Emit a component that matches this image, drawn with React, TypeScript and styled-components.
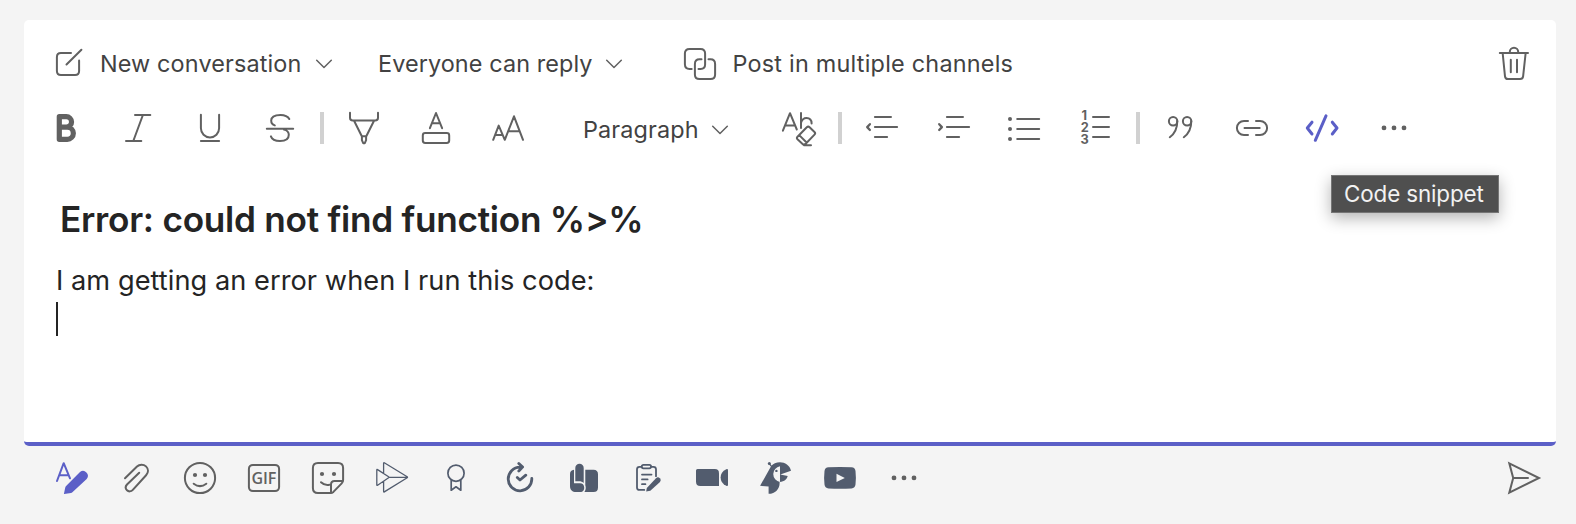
import React from "react";
import styled, { createGlobalStyle } from "styled-components";

const ink = "#616161";
const slate = "#525c6e";
const brand = "#5b5fc7";
const canvas = "#f4f4f4";

const GlobalStyle = createGlobalStyle`
  body {
    margin: 0;
    background: ${canvas};
    font-family: Inter, "Liberation Sans", sans-serif;
  }
`;

const Page = styled.main`
  box-sizing: border-box;
  width: 1576px;
  height: 524px;
  padding: 20px 20px 0 24px;
  background: ${canvas};
`;

const Composer = styled.section`
  box-sizing: border-box;
  width: 1532px;
  height: 426px;
  padding: 28px 26px 0 32px;
  background: #fff;
  border-bottom: 4px solid ${brand};
  border-radius: 5px;
`;

const OptionsRow = styled.div`
  display: flex;
  align-items: center;
  height: 32px;
`;

const Label = styled.span<{ $before: number; $width: number; $spacing: number }>`
  flex: none;
  width: ${(p) => p.$width}px;
  margin-left: ${(p) => p.$before}px;
  font-size: 23.4px;
  line-height: 32px;
  letter-spacing: ${(p) => p.$spacing}px;
  white-space: nowrap;
  color: #424242;
`;

const Spacer = styled.div<{ $width?: number }>`
  flex: ${(p) => (p.$width === undefined ? "1" : "none")};
  width: ${(p) => p.$width ?? 0}px;
`;

const FormatRow = styled.div`
  display: flex;
  align-items: center;
  height: 32px;
  margin: 32px 0 0 -6px;
`;

const ToolGroup = styled.div<{ $gap?: number }>`
  display: flex;
  flex: none;
  gap: ${(p) => p.$gap ?? 40}px;
`;

const Divider = styled.div<{ $before: number }>`
  flex: none;
  width: 4px;
  height: 32px;
  margin: 0 24px 0 ${(p) => p.$before}px;
  background: #d1d1d1;
`;

const StyleSelect = styled.div`
  display: flex;
  align-items: center;
  width: 199px;
  margin-left: 57px;
  padding-top: 4px;
`;

const Glyph = styled.svg<{ $color?: string; $weight?: number }>`
  display: block;
  flex: none;
  width: 32px;
  height: 32px;
  overflow: visible;
  fill: none;
  color: ${(p) => p.$color ?? ink};
  stroke: currentColor;
  stroke-width: ${(p) => p.$weight ?? 2};
  stroke-linecap: round;
  stroke-linejoin: round;

  .solid {
    fill: currentColor;
    stroke: none;
  }
  .cut {
    fill: ${canvas};
    stroke: none;
  }
  text {
    fill: currentColor;
    stroke: none;
    font-weight: 700;
  }
`;

const ChevronMark = styled.svg<{ $before: number }>`
  flex: none;
  width: 16px;
  height: 10px;
  margin-left: ${(p) => p.$before}px;
  overflow: visible;
  fill: none;
  stroke: ${ink};
  stroke-width: 1.5;
  stroke-linecap: round;
  stroke-linejoin: round;
`;

const Subject = styled.h1`
  margin: 55px 0 0 4px;
  font-size: 35.2px;
  font-weight: 600;
  line-height: 40px;
  letter-spacing: -0.27px;
  color: #242424;
  white-space: nowrap;
`;

const Message = styled.p`
  margin: 23px 0 0;
  font-size: 27.2px;
  line-height: 38px;
  letter-spacing: 0.05px;
  color: #242424;
  white-space: nowrap;
`;

const Caret = styled.div`
  width: 2px;
  height: 34px;
  margin-top: 2px;
  background: #242424;
`;

const ToolAnchor = styled.div`
  position: relative;
`;

const Tooltip = styled.div`
  position: absolute;
  top: 63px;
  left: 23px;
  box-sizing: border-box;
  width: 168px;
  height: 38px;
  padding-left: 12px;
  border: 1px solid #757575;
  background: #4f4f4f;
  box-shadow: 0 5px 16px rgba(0, 0, 0, 0.3);
  color: #f2f2f2;
  font-size: 22.4px;
  line-height: 36px;
  letter-spacing: -0.12px;
  white-space: nowrap;
`;

const ActionBar = styled.footer`
  display: flex;
  align-items: center;
  justify-content: space-between;
  height: 32px;
  padding: 16px 16px 0 32px;
`;

type IconProps = { children: React.ReactNode; color?: string; weight?: number };

const Icon = ({ children, color, weight }: IconProps) => (
  <Glyph viewBox="0 0 32 32" $color={color} $weight={weight} aria-hidden="true">
    {children}
  </Glyph>
);

const Chevron = ({ before }: { before: number }) => (
  <ChevronMark viewBox="0 0 16 10" $before={before}>
    <path d="M.7 1.2 8 8.5 15.3 1.2" />
  </ChevronMark>
);

const MoreIcon = ({ start }: { start: number }) => (
  <Icon>
    {[0, 10, 20].map((dx) => (
      <circle key={dx} className="solid" cx={start + dx} cy="15.9" r="2.4" />
    ))}
  </Icon>
);

const Options = () => (
  <OptionsRow>
    <Icon>
      <path d="M15 4.9H4.9Q.9 4.9.9 8.9V23.1Q.9 27.1 4.9 27.1H19.1Q23.1 27.1 23.1 23.1V12.6M10.5 16.5 25.4 1.8" />
    </Icon>
    <Label $before={12} $width={216} $spacing={0.14}>New conversation</Label>
    <Chevron before={0} />
    <Label $before={46} $width={228} $spacing={0.1}>Everyone can reply</Label>
    <Chevron before={0} />
    <Spacer $width={62} />
    <Icon>
      <path d="M7.7 20.9H5.5Q.9 20.9.9 16.3V5.5Q.9.9 5.5.9H16.5Q21.1.9 21.1 5.5V16.5Q21.1 20.9 16.7 20.9H14.5" />
      <path d="M17.5 11.3H15.5Q10.9 11.3 10.9 15.9V26.5Q10.9 31.1 15.5 31.1H26.5Q31.1 31.1 31.1 26.5V16Q31.1 11.3 26.5 11.3H24.5" />
    </Icon>
    <Label $before={16.5} $width={288} $spacing={0.23}>Post in multiple channels</Label>
    <Spacer />
    <Icon>
      <path d="M1.8 5.1H30M11.8 5V4A4.2 4.2 0 0 1 20.2 4V5M4.7 5.5 7 28.4Q7.3 31.1 10 31.1H22.1Q24.8 31.1 25.1 28.4L27.6 5.5M12.8 11.8V24.3M19 11.8V24.3" />
    </Icon>
  </OptionsRow>
);

const Formatting = () => (
  <FormatRow>
    <ToolGroup>
      <Icon weight={5.2}>
        <path d="M9.3 4.7H16.3A5.2 5.2 0 0 1 16.3 15.2H9.3M16.3 15.2H17.3A6 6 0 0 1 17.3 27.3H9.3V4.7" />
      </Icon>
      <Icon><path d="M13 3H28.3M4 29H19.3M20.9 3 11.3 29" /></Icon>
      <Icon><path d="M6.9 2.8V16.3A9.1 9.1 0 0 0 25.1 16.3V2.8M6.9 29.1H25.1" /></Icon>
      <Icon>
        <path d="M.8 16.7H27.2M23.3 7C21.8 4.2 18.5 2.9 14.5 2.9 8.5 2.9 5.2 5.3 5.2 8.6 5.2 11.3 6.5 12.8 8.8 13.4M18 17.6C21.5 18.4 22.8 20 22.8 22.8 22.8 26.8 19.5 29.1 14 29.1 9.5 29.1 6 27.5 4.9 24.4" />
      </Icon>
    </ToolGroup>
    <Divider $before={22} />
    <ToolGroup>
      <Icon>
        <path d="M2 .8V5.7Q2 8.5 4.8 8.5H27.2Q30 8.5 30 5.7V.8M6.2 9 13.8 24.3H18.3L25.9 9M13.9 24.5V28.2L15.2 31.2H16.8L18.1 28.2V24.5" />
      </Icon>
      <Icon>
        <path d="M9.9 16.2 16 1 22.1 16.2M11.8 11.3H20.2" />
        <rect x="2.8" y="21.1" width="26.4" height="9.9" rx="2.4" />
      </Icon>
      <Icon>
        <path d="M1.2 27.8 6.7 13.6 12.8 27.8 22 4.3 31 27.8M3.2 23H10.3M16.3 19.2H27.5" />
      </Icon>
    </ToolGroup>
    <StyleSelect>
      <Label $before={2} $width={129} $spacing={0.14}>Paragraph</Label>
      <Chevron before={0} />
    </StyleSelect>
    <Spacer $width={2} />
    <Icon>
      <path d="M.9 18.7 8 1.2 14.8 17.5M3.2 13.5H12.5M19 .9V16M19 10.8C20 7.5 22 6 24.5 6 27.8 6 29.6 8.3 29.6 11.5" />
      <path d="M24.8 15.3Q26.2 14 27.6 15.3L32.5 20Q33.8 21.3 32.5 22.6L23.7 31.7Q22 33.4 20.3 31.7L15.5 27.3Q14.2 26 15.5 24.7ZM17.2 23.1 24.6 30.5M22 33.2H29" />
    </Icon>
    <Divider $before={24} />
    <ToolGroup>
      <Icon><path d="M8.9 5.1H25M8.9 15.1H31.1M8.9 25.1H21.1" /><path strokeWidth="2.3" d="M3.9 12.2 1.2 15.1 3.9 18" /></Icon>
      <Icon><path d="M8.9 5.1H25M8.9 15.1H31.1M8.9 25.1H21.1" /><path strokeWidth="2.3" d="M1.2 12.2 3.9 15.1 1.2 18" /></Icon>
      <Icon>
        <path d="M7.2 7.1H29.2M7.2 17.1H29.2M7.2 27.1H29.2" />
        <circle className="solid" cx="0" cy="7.1" r="2" />
        <circle className="solid" cx="0" cy="17.1" r="2" />
        <circle className="solid" cx="0" cy="27.1" r="2" />
      </Icon>
      <Icon>
        <path d="M11 5.1H27M11 15.1H27M11 25.1H27" />
        <text fontSize="12.8">
          <tspan x="-.6" y="8">1</tspan>
          <tspan x="-1.3" y="19.8">2</tspan>
          <tspan x="-1.5" y="31.6">3</tspan>
        </text>
      </Icon>
    </ToolGroup>
    <Divider $before={22} />
    <ToolGroup>
      <Icon>
        <path d="M13.3 9C13.3 16 11 21.5 5.8 25.2M27.3 9C27.3 16 25 21.5 19.8 25.2" />
        <circle cx="9.1" cy="9.2" r="4.2" />
        <circle cx="23.1" cy="9.2" r="4.2" />
      </Icon>
      <Icon>
        <path d="M12 8.9H8A7.1 7.1 0 0 0 8 23.1H12M20 8.9H24A7.1 7.1 0 0 1 24 23.1H20M8.5 16H23.7" />
      </Icon>
      <ToolAnchor>
        <Icon color={brand} weight={3}>
          <path d="M4 10.2-.7 16 4 22M24.3 10.2 29 16 24.3 22M18 3.8 7.3 28.3" />
        </Icon>
        <Tooltip role="tooltip">Code snippet</Tooltip>
      </ToolAnchor>
      <MoreIcon start={4} />
    </ToolGroup>
  </FormatRow>
);

const Actions = () => (
  <ActionBar>
    <ToolGroup $gap={32}>
      <Icon color={brand}>
        <path d="M1 19 7.7 1.2 14 16.3M3.4 13.3H12.6" />
        <path className="solid" d="M8.2 32Q7.8 32 8 31.4L9.2 25.8Q9.4 24.8 10.1 24.1L24 10.1A4.8 4.8 0 0 1 30.7 16.9L16.4 30.3Q15.8 30.9 15 31Z" />
      </Icon>
      <Icon>
        <path d="M5 16.2 17 4.5C19.5 2.1 23.5 2 26 4.4 28.6 7 28.6 10.5 26.1 13.2L12.8 27.8C11.1 29.7 8.6 29.9 7 28.3 5.3 26.6 5.5 24.2 7 22.5L19.2 10.7" />
      </Icon>
      <Icon>
        <circle cx="16" cy="16" r="15.1" />
        <circle className="solid" cx="11" cy="13" r="2.1" />
        <circle className="solid" cx="21" cy="13" r="2.1" />
        <path d="M9.7 21.7Q16 26.5 22.3 21.7" />
      </Icon>
      <Icon>
        <rect x=".9" y="2.9" width="30.2" height="26.2" rx="4" />
        <text
          x="3.6"
          y="22"
          fontSize="16"
          fontFamily="Open Sans"
          style={{ fontWeight: 600 }}
          textLength="24.8"
        >
          GIF
        </text>
      </Icon>
      <Icon>
        <path d="M19 31.1H5.9Q.9 31.1.9 26.1V5.9Q.9.9 5.9.9H26.1Q31.1.9 31.1 5.9V18Q31.1 20 29.7 21.4L21.4 29.9Q20 31.1 19 31.1V22.4Q19 18.9 22.5 18.9H31M9 20.2Q12.6 23.7 17.4 22.7" />
        <circle className="solid" cx="10" cy="12" r="2.1" />
        <circle className="solid" cx="22" cy="12" r="2.1" />
      </Icon>
      <Icon color={slate} weight={1.3}>
        <path d="M7.6 11.4V1.2Q7.6.4 8.3.8L31.2 14.8Q31.8 15.3 31.2 15.8L8.3 29.9Q7.6 30.3 7.6 29.6V19.6M.8 8Q.8 7 1.6 7.6L12.6 14.8Q13.3 15.3 12.6 15.8L1.6 23.2Q.8 23.7.8 22.8ZM13 15.3H31" />
      </Icon>
      <Icon color={slate} weight={1.7}>
        <circle cx="16" cy="11.2" r="8.1" />
        <path d="M11.2 18V28.2L16 24.8 20.8 28.2V18" />
      </Icon>
      <Icon color={slate} weight={2.8}>
        <path d="M27.8 16.5A11.8 11.8 0 1 1 16 5.2H18.4M14.8 1.4 18.6 5.1 14.8 8.9M13.3 15.5 16 18 21.8 13.2" />
      </Icon>
      <Icon color={slate}>
        <path className="solid" d="M6 7.8C3.5 8 2 9.5 2 12V24C2 28 4.5 30 8 30H12C15.3 30 16.2 28 16.2 25.5 16.2 22.8 14.4 21.3 12 21.3H6Z" />
        <path className="solid" d="M7.3 19.2V6A4.2 4.2 0 0 1 15.7 6V21.1C14.6 19.8 13 19.2 11 19.2Z" />
        <path className="solid" d="M17.3 7.8H25.5Q30 7.8 30 12.3V25.5Q30 30 25.5 30H16.4C17.8 28 18.2 25.5 17.3 23.2Z" />
      </Icon>
      <Icon color={slate} weight={1.8}>
        <path d="M9.5 4.8H7.5Q5 4.8 5 7.3V25.4Q5 27.9 7.5 27.9H12.3M19 4.8H21.5Q24 4.8 24 7.3V14.2M10 12.6H19.5M10 17.4H15.6M10 22.2H13.4" />
        <rect x="9.7" y="2.8" width="9.4" height="3.5" rx="1.7" />
        <path className="solid" d="M14.2 29.4 14.8 26 24 16.2A2.8 2.8 0 0 1 28 20.1L18.3 28.7Z" />
      </Icon>
      <Icon color={slate}>
        <path className="solid" d="M1.5 7H18.8Q23 7 23 11.2V24H4.2Q0 24 0 19.8V8.5Q0 7 1.5 7Z" />
        <path className="solid" d="M30.2 7.2Q32 6.4 32 8.3V22.7Q32 24.6 30.2 23.8 24.6 21 24.6 15.5 24.6 10 30.2 7.2Z" />
      </Icon>
      <Icon color={slate}>
        <path className="solid" d="M.1 23.8 11.2 4C13 1.6 16.3.2 20 .2 25 .2 29.8 3.2 31 8.7L20.3 12.4 27.7 13.9C27 17 24.7 19.3 19.6 20.1 20 26.5 15.5 31.6 8.6 31.8V24.6Z" />
        <path className="cut" d="M20 4.2A8 8 0 0 0 20 20Z" />
        <circle className="solid" cx="16.4" cy="8.9" r="1.2" />
        <circle className="solid" cx="9.3" cy="1.6" r="1.5" />
        <path strokeWidth="1.2" d="M9.5 2 11.7 4.6" />
      </Icon>
      <Icon color={slate}>
        <path className="solid" d="M4.5 5.3Q16 4.7 27.5 5.3 31.1 5.6 31.5 9 32.3 16 31.5 22.6 31.1 26.1 27.5 26.4 16 27.1 4.5 26.4.9 26.1.5 22.6-.3 16 .5 9 .9 5.6 4.5 5.3Z" />
        <path className="cut" d="M12.5 11.8V20.1L20.8 16Z" />
      </Icon>
      <MoreIcon start={6} />
    </ToolGroup>
    <Icon weight={2}>
      <path strokeLinejoin="miter" d="M1.3 1.3 31 16 1.3 30.7 5.2 16ZM5.2 16H20" />
    </Icon>
  </ActionBar>
);

export default function App() {
  return (
    <>
      <GlobalStyle />
      <Page>
        <Composer>
          <Options />
          <Formatting />
          <Subject>Error: could not find function %&gt;%</Subject>
          <Message>I am getting an error when I run this code:</Message>
          <Caret />
        </Composer>
        <Actions />
      </Page>
    </>
  );
}
